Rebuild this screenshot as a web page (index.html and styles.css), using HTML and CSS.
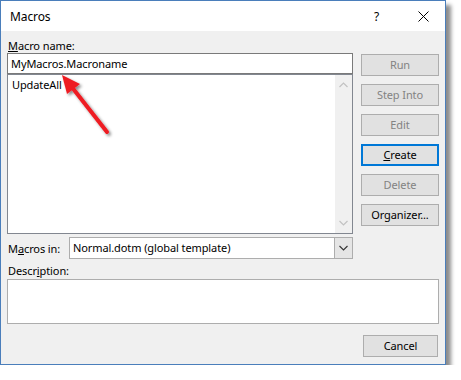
FILE: index.html
```html
<!DOCTYPE html>
<html lang="en">
<head>
    <meta charset="UTF-8">
    <meta name="viewport" content="width=device-width, initial-scale=1.0">
    <title>Macros</title>
    <link rel="stylesheet" href="styles.css">
</head>
<body>
    <div class="dialog">
        <div class="titlebar">
            <span class="title">Macros</span>
            <span class="help">?</span>
            <span class="close">
                <svg width="11" height="11" viewBox="0 0 11 11"><path d="M0.5 0.5 L10.5 10.5 M10.5 0.5 L0.5 10.5" stroke="#000" stroke-width="1" fill="none"/></svg>
            </span>
        </div>
        <div class="content">
            <div class="top">
                <div class="left">
                    <div class="label"><u>M</u>acro name:</div>
                    <div class="textbox">MyMacros.Macroname</div>
                    <div class="listbox">
                        <div class="list-item">UpdateAll</div>
                        <div class="scrollbar">
                            <svg width="9" height="6" viewBox="0 0 9 6"><path d="M0.5 5 L4.5 1 L8.5 5" stroke="#c2c2c2" stroke-width="1.2" fill="none"/></svg>
                            <svg width="9" height="6" viewBox="0 0 9 6"><path d="M0.5 1 L4.5 5 L8.5 1" stroke="#c2c2c2" stroke-width="1.2" fill="none"/></svg>
                        </div>
                    </div>
                    <div class="combo-row">
                        <span class="label">M<u>a</u>cros in:</span>
                        <div class="combo">
                            <span class="combo-text">Normal.dotm (global template)</span>
                            <span class="combo-btn">
                                <svg width="9" height="6" viewBox="0 0 9 6"><path d="M0.5 1 L4.5 5 L8.5 1" stroke="#333" stroke-width="1.1" fill="none"/></svg>
                            </span>
                        </div>
                    </div>
                </div>
                <div class="buttons">
                    <div class="btn disabled">Run</div>
                    <div class="btn disabled">Step Into</div>
                    <div class="btn disabled">Edit</div>
                    <div class="btn focused"><u>C</u>reate</div>
                    <div class="btn disabled">Delete</div>
                    <div class="btn">Or<u>g</u>anizer...</div>
                </div>
            </div>
            <div class="label desc-label">Descr<u>i</u>ption:</div>
            <div class="description"></div>
            <div class="footer">
                <div class="btn cancel">Cancel</div>
            </div>
        </div>
        <svg class="arrow" width="130" height="150" viewBox="0 0 130 150">
            <defs>
                <filter id="shadow" x="-20%" y="-20%" width="150%" height="150%">
                    <feDropShadow dx="2" dy="2" stdDeviation="1.5" flood-color="#000" flood-opacity="0.45"/>
                </filter>
            </defs>
            <g filter="url(#shadow)">
                <line x1="107" y1="132" x2="71" y2="86" stroke="#ee1c24" stroke-width="4" stroke-linecap="round"/>
                <polygon points="62,75 80,84 67,94" fill="#ee1c24"/>
            </g>
        </svg>
    </div>
</body>
</html>
```

FILE: styles.css
```css
body {
    margin: 0;
    padding: 0;
    background: #fff;
    font-family: "Noto Sans", "Open Sans", sans-serif;
    font-size: 11px;
    letter-spacing: -0.1px;
    color: #000;
}
.dialog {
    position: relative;
    width: 444px;
    height: 363px;
    border: 1px solid #4a7ebb;
    background: #f0f0f0;
    box-shadow: 5px 5px 4px rgba(0, 0, 0, 0.45);
}
.titlebar {
    height: 30px;
    background: #fff;
    display: flex;
    align-items: center;
    font-size: 12px;
}
.title {
    margin-left: 9px;
    flex: 1;
}
.help {
    width: 14px;
    margin-right: 30px;
}
.close {
    display: flex;
    margin-right: 16px;
}
.content {
    padding: 7px 6px 0 6px;
}
.top {
    display: flex;
    gap: 8px;
}
.left {
    width: 346px;
}
.label {
    line-height: 15px;
    padding-left: 1px;
}
.textbox {
    height: 19px;
    line-height: 19px;
    border: 1px solid #7a7a7a;
    background: #fff;
    padding-left: 3px;
}
.listbox {
    position: relative;
    height: 158px;
    border: 1px solid #828790;
    background: #fff;
    display: flex;
}
.list-item {
    flex: 1;
    padding: 2px 0 0 4px;
    line-height: 16px;
}
.scrollbar {
    width: 17px;
    background: #f0f0f0;
    display: flex;
    flex-direction: column;
    justify-content: space-between;
    align-items: center;
    padding: 7px 0 7px 0;
}
.combo-row {
    display: flex;
    align-items: center;
    margin-top: 3px;
}
.combo-row .label {
    width: 61px;
}
.combo {
    flex: 1;
    height: 20px;
    border: 1px solid #adadad;
    background: #fff;
    display: flex;
}
.combo-text {
    flex: 1;
    line-height: 20px;
    padding-left: 3px;
}
.combo-btn {
    width: 17px;
    background: #e5e5e5;
    border-left: 1px solid #adadad;
    display: flex;
    align-items: center;
    justify-content: center;
}
.buttons {
    display: flex;
    flex-direction: column;
    gap: 8px;
    padding-top: 16px;
}
.btn {
    width: 76px;
    height: 20px;
    line-height: 20px;
    border: 1px solid #adadad;
    background: #e1e1e1;
    text-align: center;
}
.btn.disabled {
    color: #838383;
}
.btn.focused {
    border: 2px solid #0078d7;
    width: 74px;
    height: 18px;
    line-height: 18px;
}
.desc-label {
    margin-top: 4px;
}
.description {
    width: 430px;
    height: 43px;
    margin-top: 1px;
    border: 1px solid #adadad;
    background: #fff;
}
.footer {
    display: flex;
    justify-content: flex-end;
    margin-top: 11px;
    padding-right: 1px;
}
.btn.cancel {
    width: 73px;
}
.arrow {
    position: absolute;
    left: -1px;
    top: -1px;
}
```
